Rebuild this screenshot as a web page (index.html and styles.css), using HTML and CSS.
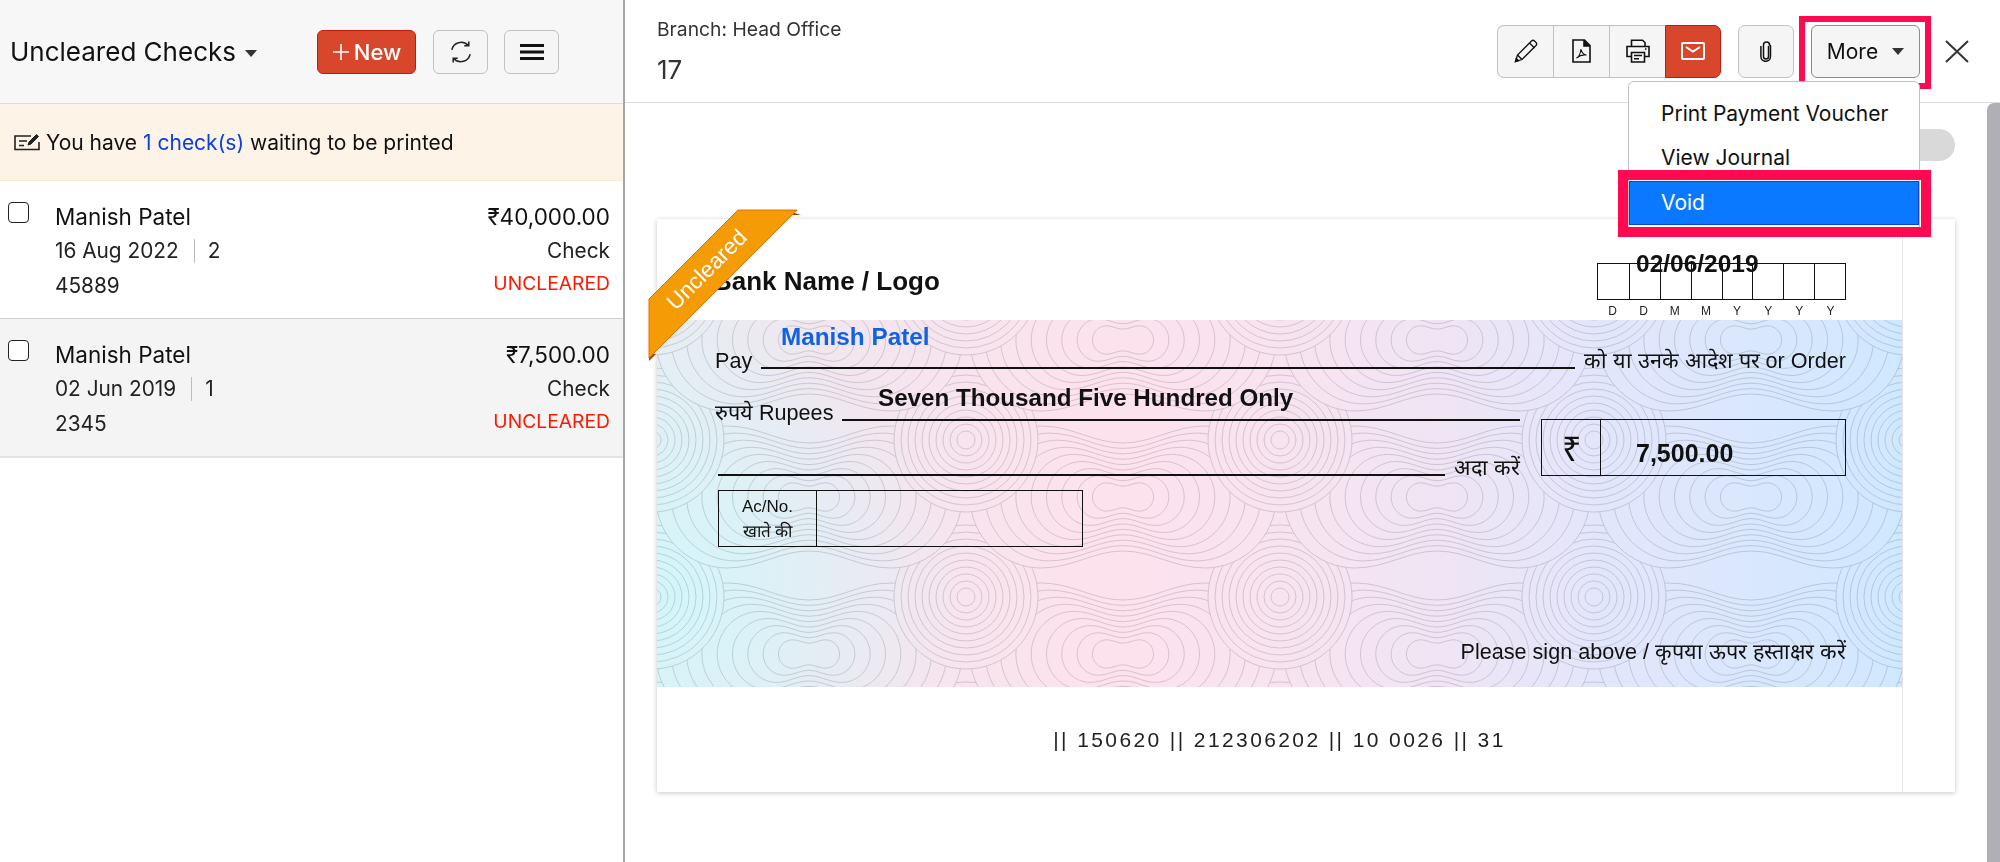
FILE: index.html
```html
<!DOCTYPE html>
<html>
<head>
  <meta charset="UTF-8">
  <meta name="viewport" content="width=device-width, initial-scale=1.0">
  <title>Uncleared Checks</title>
  <link rel="stylesheet" href="styles.css">
</head>
<body>
  <div class="app">
    <!-- Left list of checks -->
    <aside class="list">
      <div class="list-head">
        <h1 class="list-title">Uncleared Checks</h1>
        <span class="caret caret-title"></span>
        <button class="btn btn-new">
          <svg width="18" height="18" viewBox="0 0 18 18"><path d="M9 1v16M1 9h16" stroke="#fff" stroke-width="1.6"/></svg>
          New
        </button>
        <button class="btn btn-square btn-refresh">
          <svg width="26" height="26" viewBox="0 0 24 24" fill="none" stroke="#222" stroke-width="1.4"><path d="M3.500 10A8.800 8.800 0 0 1 18.500 5.800"/><path d="M20.500 14A8.800 8.800 0 0 1 5.500 18.200"/><path d="M15 6.300h4.200V2.200M9 17.700H4.800V21.800"/></svg>
        </button>
        <button class="btn btn-square btn-menu">
          <svg width="24" height="18" viewBox="0 0 24 18"><path d="M0 2.500h24M0 9h24M0 15.500h24" stroke="#111" stroke-width="3"/></svg>
        </button>
      </div>
      <div class="notice">
        <svg width="26" height="18" viewBox="0 0 26 18" fill="none" stroke="#222" stroke-width="1.600"><path d="M17 3H1v13.500h24V9"/><path d="M5 8h8M5 12.500h5"/><path d="M14 12l1-3 7.500-7.500 2 2L17 11z" fill="#222" stroke-width="1"/></svg>
        <span>You have <a class="notice-link">1 check(s)</a> waiting to be printed</span>
      </div>

      <div class="check-row">
        <span class="checkbox"></span>
        <div class="check-info">
          <div class="check-name">Manish Patel</div>
          <div class="check-meta"><span>16 Aug 2022</span><span class="meta-sep"></span><span>2</span></div>
          <div class="check-meta">45889</div>
        </div>
        <div class="check-right">
          <div class="check-name">₹40,000.00</div>
          <div class="check-meta">Check</div>
          <div class="check-status">UNCLEARED</div>
        </div>
      </div>

      <div class="check-row check-row-active">
        <span class="checkbox"></span>
        <div class="check-info">
          <div class="check-name">Manish Patel</div>
          <div class="check-meta"><span>02 Jun 2019</span><span class="meta-sep"></span><span>1</span></div>
          <div class="check-meta">2345</div>
        </div>
        <div class="check-right">
          <div class="check-name">₹7,500.00</div>
          <div class="check-meta">Check</div>
          <div class="check-status">UNCLEARED</div>
        </div>
      </div>
    </aside>

    <!-- Right detail pane -->
    <main class="detail">
      <div class="detail-head">
        <div class="detail-title">
          <div class="branch">Branch: Head Office</div>
          <div class="doc-no">17</div>
        </div>
        <div class="tools">
          <div class="btn-group">
            <button class="btn tool">
              <svg width="24" height="24" viewBox="0 0 24 24" fill="none" stroke="#111" stroke-width="1.300"><path d="M1.500 22.500l2-6.500L17.500 2a2.200 2.200 0 0 1 3 0l1.500 1.500a2.200 2.200 0 0 1 0 3L8 20.500z"/><path d="M15.500 4l5 5M3.500 16L8 20.500"/><path d="M1.500 22.500l.8-3 2.200 2.200z" fill="#111"/></svg>
            </button>
            <button class="btn tool">
              <svg width="19" height="24" viewBox="0 0 19 24" fill="none" stroke="#111" stroke-width="1.600"><path d="M1 1h11.500L18 6.500V23H1z"/><path d="M12 1v6h6" fill="#111"/><path d="M4.500 19c2-1 4-5 4.500-9 .5 3 2.500 5.500 5.500 6-3.500-.5-7 .5-10 3z" stroke-width="1.100"/></svg>
            </button>
            <button class="btn tool">
              <svg width="24" height="24" viewBox="0 0 24 24" fill="none" stroke="#111" stroke-width="1.600"><path d="M5.500 7V1.200h11L19 3.500V7"/><path d="M5.500 17.500H1V7.500h22v10h-4.500"/><path d="M5.500 13.500h13v9.500h-13z"/><path d="M8 16.500h8M8 19.800h5"/><path d="M19 10h1.500"/></svg>
            </button>
            <button class="btn tool tool-mail">
              <svg width="24" height="18" viewBox="0 0 24 18" fill="none" stroke="#fff" stroke-width="2"><rect x="1" y="1" width="22" height="16" rx="1"/><path d="M5 5l7 4.500L19 5"/></svg>
            </button>
          </div>
          <button class="btn tool tool-clip">
            <svg width="12" height="21" viewBox="0 0 12 21" fill="none" stroke="#111" stroke-width="1.500"><path d="M8.500 5v10.500a2.500 2.500 0 0 1-5 0V4a3 3 0 0 1 6 0 1 1 0 0 1 1 1v10.500a4.800 4.800 0 0 1-9.600 0V5"/></svg>
          </button>
          <div class="more-wrap">
            <button class="btn btn-more">More <span class="caret"></span></button>
            <span class="highlight highlight-more"></span>
            <div class="dropdown">
              <div class="dropdown-item">Print Payment Voucher</div>
              <div class="dropdown-item">View Journal</div>
              <div class="dropdown-item dropdown-item-active">Void<span class="highlight highlight-void"></span></div>
            </div>
          </div>
          <svg class="close" width="24" height="23" viewBox="0 0 24 23"><path d="M1 1l22 21M23 1L1 22" stroke="#333" stroke-width="2"/></svg>
        </div>
      </div>

      <div class="detail-body">
        <div class="scroll-area">
          <div class="toggle-row"><span class="toggle"></span></div>
          <div class="sheet">
            <svg class="ribbon" width="156" height="156" viewBox="0 0 156 156">
              <path d="M137 1l16 5-14 0z" fill="#8a4b00"/>
              <path d="M1 144l7 1-7 7z" fill="#8a4b00"/>
              <path d="M90 1h59L1 149V90z" fill="#f59b06" stroke="#e86f00" stroke-width="1"/>
              <text class="ribbon-text" x="64" y="66" text-anchor="middle" transform="rotate(-45 64 66)">Uncleared</text>
            </svg>
            <div class="cheque">
              <div class="cheque-top">
                <div class="bank-name">Bank Name / Logo</div>
                <div class="date-box">
                  <div class="date-value">02/06/2019</div>
                  <div class="date-cells"><span></span><span></span><span></span><span></span><span></span><span></span><span></span><span></span></div>
                  <div class="date-labels"><span>D</span><span>D</span><span>M</span><span>M</span><span>Y</span><span>Y</span><span>Y</span><span>Y</span></div>
                </div>
              </div>
              <div class="cheque-body">
                <svg class="guilloche" width="100%" height="100%">
                  <defs>
                    <g id="disc" fill="#fff" stroke="#dbdbde">
                      <circle r="72"/><circle r="65"/><circle r="58"/><circle r="51"/><circle r="44"/><circle r="37"/><circle r="30"/><circle r="23"/><circle r="16"/><circle r="9"/>
                    </g>
                    <path id="peanut" vector-effect="non-scaling-stroke" d="M-153 0C-153-40-120-71-82-71C-50-71-30-54 0-54C30-54 50-71 82-71C120-71 153-40 153 0C153 40 120 71 82 71C50 71 30 54 0 54C-30 54-50 71-82 71C-120 71-153 40-153 0Z"/>
                    <g id="peanuts" fill="#fff" stroke="#dbdbde">
                      <use href="#peanut"/>
                      <use href="#peanut" transform="scale(.9)"/>
                      <use href="#peanut" transform="scale(.8)"/>
                      <use href="#peanut" transform="scale(.7)"/>
                      <use href="#peanut" transform="scale(.6)"/>
                      <use href="#peanut" transform="scale(.5)"/>
                      <use href="#peanut" transform="scale(.4)"/>
                      <use href="#peanut" transform="scale(.3)"/>
                      <use href="#peanut" transform="scale(.2)"/>
                    </g>
                    <pattern id="scales" width="314" height="157" patternUnits="userSpaceOnUse" patternTransform="translate(152 20)">
                      <rect width="314" height="157" fill="#fff"/>
                      <use href="#peanuts" x="0" y="157"/>
                      <use href="#peanuts" x="314" y="157"/>
                      <use href="#disc" x="157" y="100"/>
                      <use href="#peanuts" x="0" y="0"/>
                      <use href="#peanuts" x="314" y="0"/>
                      <use href="#disc" x="157" y="-57"/>
                    </pattern>
                  </defs>
                  <rect width="100%" height="100%" fill="url(#scales)"/>
                </svg>
                <div class="payee">Manish Patel</div>
                <div class="form-row">
                  <span>Pay</span>
                  <span class="rule"></span>
                  <span>को या उनके आदेश पर or Order</span>
                </div>
                <div class="words">Seven Thousand Five Hundred Only</div>
                <div class="mid">
                  <div class="mid-left">
                    <div class="form-row">
                      <span>रुपये Rupees</span>
                      <span class="rule"></span>
                    </div>
                    <div class="form-row form-row-pay">
                      <span class="rule"></span>
                      <span>अदा करें</span>
                    </div>
                  </div>
                  <div class="amount-box">
                    <div class="amount-sym">₹</div>
                    <div class="amount-val">7,500.00</div>
                  </div>
                </div>
                <div class="ac-box">
                  <div class="ac-label">Ac/No.<br>खाते की</div>
                  <div class="ac-value"></div>
                </div>
                <div class="sign">Please sign above / कृपया ऊपर हस्ताक्षर करें</div>
              </div>
              <div class="micr">|| 150620 || 212306202 || 10 0026 || 31</div>
            </div>
          </div>
        </div>
        <div class="scrollbar"></div>
      </div>
    </main>
  </div>
</body>
</html>
```

FILE: styles.css
```css
body {
  margin: 0;
  font-family: Inter, "Noto Sans", sans-serif;
  color: #111;
  background: #fff;
}
.app {
  display: flex;
  height: 862px;
  overflow: hidden;
}
.btn {
  display: flex;
  align-items: center;
  justify-content: center;
  padding: 0;
  font-family: inherit;
  color: #111;
  background: #f5f5f5;
  border: 1px solid #c2c2c2;
  border-radius: 6px;
}
.caret {
  display: inline-block;
  width: 0;
  height: 0;
  border-left: 6px solid transparent;
  border-right: 6px solid transparent;
  border-top: 7px solid #333;
}

/* Left list */
.list {
  width: 623px;
  flex: none;
  border-right: 2px solid #a6a6a6;
}
.list-head {
  display: flex;
  align-items: center;
  height: 103px;
  padding-left: 10px;
  background: #f7f7f7;
  border-bottom: 1px solid #dcdcdc;
}
.list-title {
  margin: 0;
  font-size: 26px;
  font-weight: 400;
}
.caret-title {
  margin: 4px 0 0 9px;
}
.btn-new {
  gap: 4px;
  width: 99px;
  height: 44px;
  margin-left: 60px;
  font-size: 22px;
  font-weight: 500;
  color: #fff;
  background: #d8472b;
  border-color: #c4180c;
}
.btn-square {
  width: 55px;
  height: 44px;
}
.btn-refresh {
  margin-left: 17px;
}
.btn-menu {
  margin-left: 16px;
}
.notice {
  display: flex;
  align-items: center;
  gap: 6px;
  height: 76px;
  padding-left: 14px;
  font-size: 21px;
  background: #fdf3e7;
  border-bottom: 1px solid #fbe9d2;
}
.notice-link {
  color: #0a3fe0;
}
.check-row {
  display: flex;
  height: 137px;
  padding: 0 13px 0 8px;
  border-bottom: 1px solid #cfcfcf;
  box-sizing: content-box;
}
.check-row-active {
  background: #f4f4f4;
  border-bottom: 2px solid #e2e2e2;
}
.checkbox {
  flex: none;
  box-sizing: border-box;
  width: 21px;
  height: 21px;
  margin-top: 21px;
  background: #fff;
  border: 1.5px solid #222;
  border-radius: 4px;
}
.check-info {
  flex: 1;
  margin-left: 26px;
  padding-top: 19px;
}
.check-right {
  padding-top: 19px;
  text-align: right;
}
.check-name,
.check-meta {
  height: 34px;
  font-size: 22.5px;
  line-height: 34px;
}
.check-meta {
  display: flex;
  align-items: center;
  justify-content: flex-end;
  font-size: 20.800px;
  color: #222;
}
.check-info .check-meta {
  justify-content: flex-start;
}
.check-meta + .check-meta {
  margin-top: 1px;
}
.meta-sep {
  width: 1px;
  height: 24px;
  margin: 0 13px 0 15px;
  background: #bdbdbd;
}
.check-status {
  font-size: 19.300px;
  line-height: 30px;
  color: #fb1a00;
}

/* Right pane */
.detail {
  flex: 1;
  display: flex;
  flex-direction: column;
  min-width: 0;
}
.detail-head {
  display: flex;
  align-items: center;
  justify-content: space-between;
  height: 102px;
  padding: 0 31px 0 32px;
  border-bottom: 1px solid #dcdcdc;
}
.branch {
  font-size: 19.300px;
  color: #333;
}
.doc-no {
  margin-top: 13px;
  font-size: 26px;
  color: #333;
}
.tools {
  display: flex;
  align-items: center;
  gap: 17px;
}
.btn-group {
  display: flex;
}
.tool {
  width: 56px;
  height: 53px;
  border-radius: 0;
  border-right: 0;
}
.btn-group .tool:first-child {
  border-radius: 7px 0 0 7px;
}
.tool-mail {
  background: #d8472b;
  border: 1px solid #c4180c;
  border-radius: 0 7px 7px 0;
}
.tool-clip {
  border: 1px solid #c2c2c2;
  border-radius: 7px;
}
.more-wrap {
  position: relative;
}
.btn-more {
  gap: 14px;
  width: 109px;
  height: 53px;
  font-size: 21px;
  border-color: #8c8c8c;
}
.highlight {
  position: absolute;
  border-style: solid;
  border-color: #ff0a50;
}
.highlight-more {
  top: -9px;
  bottom: -11px;
  left: -12px;
  right: -11px;
  border-width: 6px;
}
.dropdown {
  position: absolute;
  top: 56px;
  right: 0;
  z-index: 2;
  box-sizing: border-box;
  width: 292px;
  height: 150px;
  padding: 10px 0 5px;
  background: #fff;
  border: 1px solid #c0c0c0;
  border-radius: 6px;
}
.dropdown-item {
  position: relative;
  height: 44px;
  padding-left: 32px;
  font-size: 21px;
  line-height: 44px;
}
.dropdown-item-active {
  margin-top: 1px;
  line-height: 43px;
  color: #fff;
  background: #0a78ff;
  box-shadow: inset 0 0 0 1px #0a40f0;
}
.highlight-void {
  top: -11px;
  bottom: -12px;
  left: -11px;
  right: -12px;
  border-width: 10px;
}
.close {
  margin-left: 8px;
}
.detail-body {
  flex: 1;
  display: flex;
  min-height: 0;
}
.scroll-area {
  flex: 1;
  padding: 26px 32px 0;
}
.toggle-row {
  display: flex;
  justify-content: flex-end;
  height: 32px;
  margin-bottom: 58px;
}
.toggle {
  width: 60px;
  height: 32px;
  background: #d9d9d9;
  border-radius: 16px;
}
.scrollbar {
  flex: none;
  width: 13px;
  background: #b0b0b4;
  border-radius: 7px 0 0 0;
}

/* Cheque */
.sheet {
  position: relative;
  height: 573px;
  padding-right: 52px;
  background: #fff;
  box-shadow: 0 1px 5px rgba(0, 0, 0, 0.22);
}
.ribbon {
  position: absolute;
  top: -10px;
  left: -9px;
  z-index: 1;
}
.ribbon-text {
  font-family: "Liberation Sans", sans-serif;
  font-size: 22.500px;
  fill: #fff;
}
.cheque {
  height: 100%;
  font-family: "Liberation Sans", sans-serif;
  border-right: 1px solid #e6e6e6;
}
.cheque-top {
  display: flex;
  justify-content: space-between;
  height: 101px;
  padding: 0 56px;
}
.bank-name {
  margin-top: 46px;
  font-size: 26px;
  font-weight: 700;
  line-height: 32px;
}
.date-box {
  position: relative;
  width: 249px;
  margin-top: 44px;
}
.date-value {
  position: absolute;
  top: -12px;
  left: 39px;
  font-size: 24.500px;
  font-weight: 700;
  line-height: 26px;
}
.date-cells {
  display: grid;
  grid-template-columns: repeat(8, 1fr);
  height: 35px;
  border: 1px solid #111;
}
.date-cells span {
  border-left: 1px solid #111;
}
.date-cells span:first-child {
  border-left: 0;
}
.date-labels {
  display: grid;
  grid-template-columns: repeat(8, 1fr);
  margin-top: 4px;
  font-size: 12px;
  text-align: center;
  color: #222;
}
.cheque-body {
  position: relative;
  box-sizing: border-box;
  height: 367px;
  padding: 4px 56px 0 58px;
  font-size: 21.600px;
  background:
    radial-gradient(ellipse 300px 280px at 0% 75%, #d2f6fb, rgba(210, 246, 251, 0)),
    linear-gradient(90deg, #e6eef2 0%, #f2e6ef 14%, #fde2ed 36%, #f5e4f1 56%, #e3e6fb 76%, #d0e8ff 100%);
}
.guilloche {
  position: absolute;
  top: 0;
  left: 0;
  mix-blend-mode: multiply;
}
.payee,
.form-row,
.words,
.mid,
.ac-box,
.sign {
  position: relative;
}
.payee {
  margin-left: 66px;
  font-size: 24.300px;
  font-weight: 700;
  line-height: 26px;
  color: #0f62e4;
}
.form-row {
  display: flex;
  align-items: flex-end;
  gap: 9px;
  height: 22px;
  line-height: 22px;
}
.rule {
  flex: 1;
  height: 2px;
  margin-bottom: 3px;
  background: #111;
}
.words {
  margin: 13px 0 -9px 163px;
  font-size: 24.200px;
  font-weight: 700;
  line-height: 26px;
}
.mid {
  display: flex;
  align-items: flex-start;
}
.mid-left {
  width: 805px;
  flex: none;
}
.form-row-pay {
  margin: 33px 0 0 3px;
}
.amount-box {
  display: flex;
  box-sizing: border-box;
  width: 305px;
  height: 57px;
  margin: 17px 0 0 21px;
  border: 1.5px solid #111;
}
.amount-sym {
  width: 58px;
  padding-top: 5px;
  font-size: 34px;
  line-height: 48px;
  text-align: center;
  border-right: 1.5px solid #111;
}
.amount-val {
  padding: 17px 0 0 35px;
  font-size: 25px;
  font-weight: 700;
  line-height: 32px;
}
.ac-box {
  display: flex;
  box-sizing: border-box;
  width: 365px;
  height: 57px;
  margin: 11px 0 0 3px;
  border: 1.5px solid #111;
}
.ac-label {
  width: 97px;
  padding-top: 3px;
  font-size: 17px;
  line-height: 25px;
  text-align: center;
  border-right: 1.5px solid #111;
}
.sign {
  margin-top: 94px;
  line-height: 22px;
  text-align: right;
}
.micr {
  padding-top: 41px;
  font-size: 21px;
  letter-spacing: 2.400px;
  line-height: 24px;
  text-align: center;
  color: #222;
}
```
